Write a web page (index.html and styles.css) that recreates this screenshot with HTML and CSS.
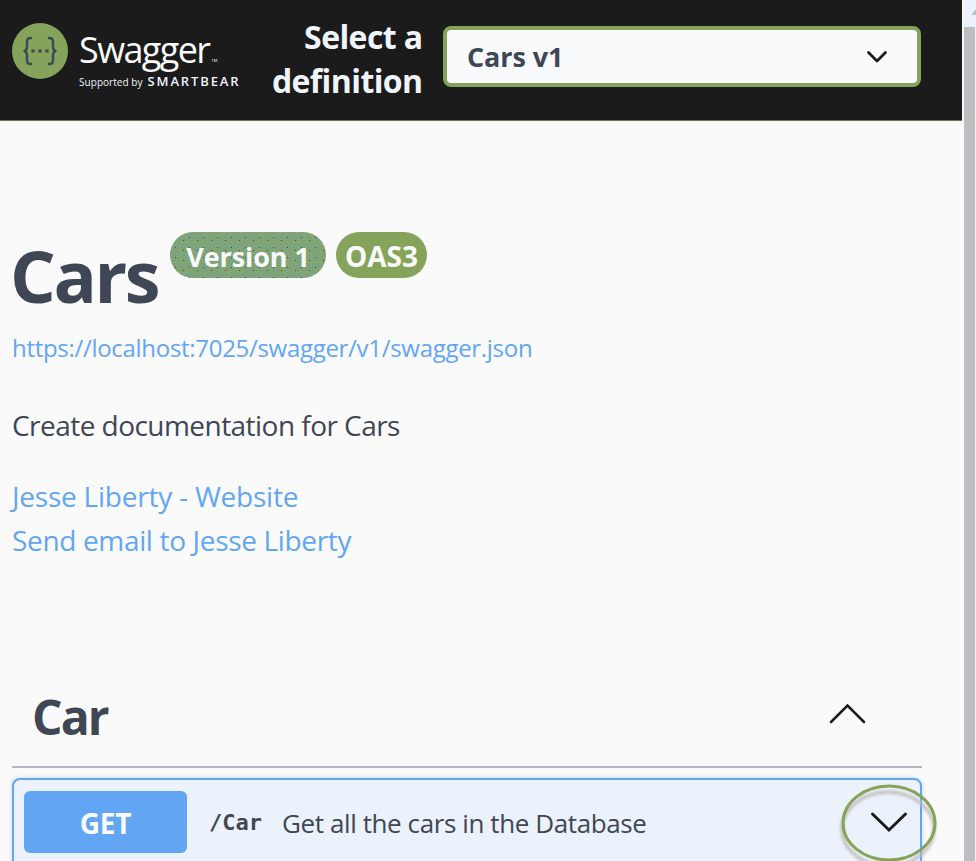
FILE: index.html
```html
<!DOCTYPE html>
<html lang="en">
<head>
<meta charset="utf-8">
<title>Swagger UI</title>
<link rel="stylesheet" href="styles.css">
</head>
<body>
<div class="window">
  <div class="page">
    <header class="topbar">
      <div class="logo">
        <svg class="logo-mark" viewBox="0 0 56 56" width="56" height="56" fill="none" stroke="#414855" stroke-width="2.4">
          <circle cx="28" cy="28" r="28" fill="#85a35b" stroke="none"/>
          <path d="M20 15h-1.500q-3.500 0-3.500 3.500v5q0 4.500-3.500 4.500q3.500 0 3.500 4.500v5q0 3.500 3.500 3.500h1.500M36 15h1.500q3.500 0 3.500 3.500v5q0 4.500 3.500 4.500q-3.500 0-3.500 4.500v5q0 3.500-3.500 3.500h-1.500"/>
          <path stroke-width="3.200" d="M19.400 28h3.200M26.400 28h3.200M33.400 28h3.200"/>
        </svg>
        <div class="logo-text">
          <div class="logo-name"><span class="wordmark">Swagger</span><span class="tm">TM</span></div>
          <div class="logo-sub"><span class="supported">Supported by</span><span class="smartbear">SMARTBEAR</span></div>
        </div>
      </div>
      <label class="select-label" for="definition">Select a<br>definition</label>
      <button class="select" id="definition"><span class="select-value">Cars v1</span>
        <svg width="22" height="14" viewBox="0 0 22 14" fill="none" stroke="#1b1b1b" stroke-width="2.800" stroke-linecap="round" stroke-linejoin="round"><path d="M2.500 2.500L11 11l8.500-8.500"/></svg>
      </button>
    </header>
    <main class="content">
      <div class="title-row">
        <h1 class="title">Cars</h1>
        <span class="badge badge-version">
          <svg class="dots" width="156" height="46" shape-rendering="crispEdges">
            <pattern id="dots" width="14" height="10" patternUnits="userSpaceOnUse"><path d="M0 0h1v1H0zM2 0h1v1H2zM5 0h1v1H5zM7 0h1v1H7zM10 0h1v1H10zM12 0h1v1H12zM1 2h1v1H1zM3 2h1v1H3zM6 2h1v1H6zM9 2h1v1H9zM11 2h1v1H11zM0 4h1v1H0zM4 4h1v1H4zM6 4h1v1H6zM8 4h1v1H8zM13 4h1v1H13zM2 5h1v1H2zM10 5h1v1H10zM1 7h1v1H1zM4 7h1v1H4zM7 7h1v1H7zM9 7h1v1H9zM12 7h1v1H12zM3 9h1v1H3zM5 9h1v1H5zM8 9h1v1H8zM11 9h1v1H11z" fill="#62a6f3"/><path d="M5 5h1v1H5zM13 8h1v1H13z" fill="#414855"/></pattern>
            <rect width="156" height="46" fill="url(#dots)"/>
          </svg>
          <span class="badge-label">Version 1</span>
        </span>
        <span class="badge badge-oas">OAS3</span>
      </div>
      <a class="spec">https://localhost:7025/swagger/v1/swagger.json</a>
      <p class="description">Create documentation for Cars</p>
      <div class="contact">
        <a class="website">Jesse Liberty - Website</a>
        <a class="email">Send email to Jesse Liberty</a>
      </div>
      <section>
        <div class="tag">
          <h2 class="tag-name">Car</h2>
          <svg width="40" height="24" viewBox="0 0 40 24" fill="none" stroke="#1b1b1b" stroke-width="2.500" stroke-linecap="round"><path d="M3 20L19.500 3.500L36 20"/></svg>
        </div>
        <div class="operation">
          <span class="method">GET</span>
          <span class="path">/Car</span>
          <span class="summary">Get all the cars in the Database</span>
          <div class="toggle">
            <svg width="40" height="24" viewBox="0 0 40 24" fill="none" stroke="#1b1b1b" stroke-width="3" stroke-linecap="round"><path d="M3.500 4L20 20L36.500 4"/></svg>
            <svg class="ring" width="110" height="90" viewBox="0 0 110 90" fill="none"><ellipse cx="55" cy="43" rx="46" ry="37" stroke="#85a35b" stroke-width="3"/></svg>
          </div>
        </div>
      </section>
    </main>
  </div>
  <div class="scrollbar"><div class="scroll-up"><svg width="12" height="27"><path d="M12 9v6H7.500z" fill="#bfbcbc"/></svg></div><div class="thumb"></div></div>
</div>
</body>
</html>
```
FILE: styles.css
```css
* { box-sizing: border-box; }
body { margin: 0; background: #fafafa; color: #3f4654; font-family: "Open Sans", sans-serif; overflow: hidden; }
h1, h2, p { margin: 0; }
.window { display: flex; height: 861px; overflow: hidden; }
.page { width: 962px; flex: none; }
.topbar { display: flex; height: 121px; background: #1b1b1b; border-bottom: 1px solid #62783f; color: #f0f4fb; }
.logo { display: flex; width: 260px; padding: 23px 0 0 12px; gap: 11px; }
.logo-mark { flex: none; }
.logo-name { display: flex; align-items: flex-end; height: 50px; margin-top: 2px; color: #fafafa; }
.wordmark { font-size: 36px; line-height: 50px; letter-spacing: -1.600px; }
.tm { font-size: 4px; line-height: 28px; margin-left: 2px; }
.logo-sub { display: flex; align-items: baseline; height: 16px; line-height: 16px; margin-top: -2px; gap: 5px; white-space: nowrap; }
.supported { font-size: 10px; letter-spacing: 0.050px; }
.smartbear { font-size: 13px; font-weight: 600; letter-spacing: 1.850px; }
.select-label { width: 162.500px; margin-right: 0.500px; padding-top: 15px; text-align: right; font-size: 32px; font-weight: 700; line-height: 43.500px; letter-spacing: -0.600px; white-space: nowrap; }
.select { display: flex; align-items: center; justify-content: space-between; width: 478px; height: 61px; margin: 26px 0 0 20px; padding: 0 29px 0 20px; border: 4px solid #85a35b; border-radius: 8px; background: #f8fafc; color: #3f4654; font: 700 27px/40px "Open Sans", sans-serif; letter-spacing: -0.100px; }
.content { padding: 111px 40px 0 12px; }
.title-row { display: flex; height: 100px; align-items: flex-start; }
.title { width: 158px; margin: -6px 2px 0 -2px; font-size: 72px; line-height: 98px; font-weight: 700; letter-spacing: -2.400px; flex: none; }
.badge { display: flex; align-items: center; justify-content: center; height: 46px; padding-top: 2px; border-radius: 23px; background: #85a35b; color: #fafafa; font-size: 27px; font-weight: 700; white-space: nowrap; }
.badge-version { position: relative; width: 156px; overflow: hidden; letter-spacing: -0.100px; }
.dots { position: absolute; left: 0; top: 0; }
.badge-label { position: relative; }
.badge-oas { width: 91px; margin-left: 10px; font-size: 28px; }
.spec { display: block; height: 34px; margin-top: -1px; line-height: 34px; font-size: 24px; letter-spacing: -0.300px; color: #62a6f3; white-space: nowrap; }
.description { margin-top: 38px; height: 44px; font-size: 28px; line-height: 44px; letter-spacing: -0.540px; }
.contact { display: flex; flex-direction: column; margin-top: 27px; font-size: 28px; line-height: 44px; color: #62a6f3; }
.website { letter-spacing: -0.220px; }
.email { letter-spacing: -0.340px; }
.tag { display: flex; align-items: center; justify-content: space-between; height: 106px; margin-top: 100px; padding: 0 54px 0 20px; border-bottom: 2px solid #b5b6bd; }
.tag-name { padding-top: 5px; font-size: 48px; line-height: 66px; letter-spacing: -1.900px; }
.operation { display: flex; align-items: center; width: 910px; height: 90px; margin-top: 10px; border: 2px solid #62a6f3; border-radius: 8px; background: #ebf2fb; box-shadow: 0 0 4px #c9d3e4; padding: 0 11px 2px 10px; }
.method { display: flex; align-items: center; justify-content: center; width: 163px; height: 62px; padding-top: 1px; border-radius: 6px; background: #62a6f3; color: #fafafa; font-size: 28px; font-weight: 700; letter-spacing: -0.300px; }
.path { margin-left: 22px; width: 73px; padding-top: 2px; font: 700 22px/40px "DejaVu Sans Mono", monospace; }
.summary { flex: 1; padding-top: 1px; font-size: 26px; line-height: 40px; letter-spacing: -0.400px; white-space: nowrap; }
.toggle { position: relative; width: 40px; height: 24px; }
.ring { position: absolute; left: -35px; top: -30px; filter: drop-shadow(-1px 6px 1.500px #bfb8b8); }
.scrollbar { width: 12px; margin-left: 2px; background: #ebf2fb; }
.scroll-up { height: 27px; }
.thumb { height: 834px; width: 11px; background: #bfbdbf; }
```
